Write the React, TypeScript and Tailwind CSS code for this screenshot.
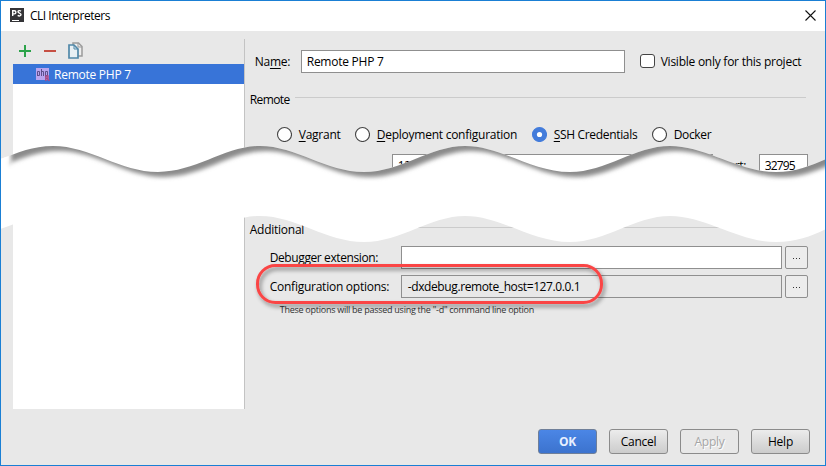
import type { ReactNode } from "react";

const WAVE_TOP =
  "M0 159 C18 153 32 146 53 146 C90 146 120 172 158 172 C196 172 225 146 260 146 C296 146 326 172 364 172 C401 172 430 146 465 146 C501 146 532 172 570 172 C606 172 635 146 670 146 C706 146 738 172 776 172 C796 172 812 165 826 159";

function Label({ children, className = "" }: { children: ReactNode; className?: string }) {
  return <span className={"block shrink-0 whitespace-nowrap leading-4 " + className}>{children}</span>;
}

function Mnemonic({ children }: { children: string }) {
  return <span className="underline decoration-1 underline-offset-2">{children}</span>;
}

function Radio({ checked = false }: { checked?: boolean }) {
  return (
    <svg className="block shrink-0" width="16" height="16" viewBox="0 0 16 16">
      <circle cx="8.5" cy="8.5" r="7" fill={checked ? "#437cdb" : "#fff"} stroke={checked ? "#437cdb" : "#444"} strokeWidth="1.1" />
      {checked && <circle cx="8.5" cy="8.5" r="2.6" fill="#fff" />}
    </svg>
  );
}

function Browse() {
  return (
    <button className="ml-[3px] flex h-[23px] w-[23px] shrink-0 items-center justify-center gap-[2px] rounded-[2px] border border-[#8f8f8f] bg-[#ececec] pt-[2px]">
      <i className="size-px bg-[#333]" />
      <i className="size-px bg-[#333]" />
      <i className="size-px bg-[#333]" />
    </button>
  );
}

function Section({ title, className = "" }: { title: string; className?: string }) {
  return (
    <div className="flex h-4 w-[556px]">
      <Label className={"pt-px " + className}>{title}</Label>
      <div className="mt-[6px] h-px grow bg-[#cbcbcb]" />
    </div>
  );
}

const BUTTON = "flex h-[25px] w-[59px] items-center justify-center rounded-[3px] border border-[#8b8b8b] ";

export default function App() {
  return (
    <div className="relative flex h-[466px] w-[826px] flex-col overflow-hidden border border-[#1a7fd4] bg-[#e8e8e8] font-['Open_Sans','Noto_Sans',sans-serif] text-[12px] tracking-[-0.25px] text-black">
      <header className="flex h-[30px] shrink-0 items-center bg-white pl-[9px] pr-[10px]">
        <svg className="-mt-[2px]" width="14" height="14" viewBox="0 0 14 14">
          <rect width="14" height="14" fill="#343437" />
          <path d="M2.7 8V2.7h1.6a1.5 1.5 0 0 1 0 3.2H2.7M11 3.1C9.8 2.3 8 2.5 8 3.8c0 1.5 3 1.1 3 2.8 0 1.5-2 1.7-3.3.8" fill="none" stroke="#fff" strokeWidth="1.4" />
          <path d="M2 12.5h7" stroke="#fff" />
        </svg>
        <Label className="ml-[6px] tracking-[-0.48px]">CLI Interpreters</Label>
        <svg className="-mt-px -mr-px ml-auto" width="11" height="11" viewBox="0 0 11 11">
          <path d="M.5.5l10 10M10.5.5l-10 10" stroke="#111" strokeWidth="1.1" />
        </svg>
      </header>

      <main className="flex h-[378px] shrink-0 pl-3">
        <aside className="flex w-[231px] flex-col">
          <div className="flex h-[33px] shrink-0 items-center pl-[6px] pt-[7px]">
            <svg width="12" height="12" viewBox="0 0 12 12">
              <path d="M6 0v12M0 6h12" stroke="#2ca34a" strokeWidth="2" />
            </svg>
            <svg className="ml-[13px]" width="12" height="12" viewBox="0 0 12 12">
              <path d="M0 6h12" stroke="#c64f43" strokeWidth="2" />
            </svg>
            <svg className="-mt-px ml-3" width="15" height="17" viewBox="0 0 15 17">
              <path d="M5 1h5.500l3.500 3.500V14H5z" fill="#eee" stroke="#9b9b9b" strokeWidth="1.5" />
              <path d="M10 1v4h4" fill="none" stroke="#9b9b9b" />
              <path d="M1 3h5l4 4v9H1z" fill="#e8f0f4" stroke="#5088a8" strokeWidth="1.7" />
              <path d="M6 3v4h4" fill="none" stroke="#5088a8" />
            </svg>
          </div>
          <div className="grow bg-white">
            <div className="flex h-5 items-center bg-[#3874d8] pl-[23px] text-white">
              <svg width="14" height="14" viewBox="0 0 14 14">
                <rect width="13" height="12" y="1" fill="#b9a4ef" />
                <path d="M1.500 9V4.500h2v4h-2M5.500 2v7M5.500 4.500h2v4.500M9.500 10V4.500h2v4h-2" fill="none" stroke="#5d4f8c" />
                <path d="M9.800 14V9h2.200v2.300H9.800M11 11.500l2.500 2.500" fill="none" stroke="#a94a86" strokeWidth="1.400" />
              </svg>
              <Label className="ml-[4px] mt-px">Remote PHP 7</Label>
            </div>
          </div>
        </aside>
        <div className="mt-2 w-px shrink-0 bg-[#c3c3c3]" />

        <section className="flex w-[581px] flex-col pl-[5px] pt-[19px]">
          <div className="flex h-[23px] items-center pl-[5px]">
            <Label className="w-[46px]">
              Na<Mnemonic>m</Mnemonic>e:
            </Label>
            <div className="flex h-[23px] w-[324px] items-center border border-[#8f8f8f] bg-white pl-[5px]">
              <Label>Remote PHP 7</Label>
            </div>
            <div className="-mt-[2px] ml-[15px] h-[14px] w-[15px] rounded-[3px] border border-[#444] bg-white" />
            <Label className="ml-[6px] pt-px">Visible only for this project</Label>
          </div>

          <div className="mt-[18px]">
            <Section title="Remote" className="w-[45px] tracking-[-0.6px]" />
          </div>

          <div className="mt-[19px] flex h-4 items-center pl-[26px]">
            <Radio />
            <Label className="ml-[7px] w-[55px] pt-[2px]">
              <Mnemonic>V</Mnemonic>agrant
            </Label>
            <Radio />
            <Label className="ml-[7px] w-[154px] pt-[2px]">
              <Mnemonic>D</Mnemonic>eployment configuration
            </Label>
            <Radio checked />
            <Label className="ml-[7px] w-[97px] pt-[2px] tracking-[-0.33px]">
              <Mnemonic>S</Mnemonic>SH Credentials
            </Label>
            <Radio />
            <Label className="ml-[7px] pt-[2px] tracking-[-0.35px]">Docker</Label>
          </div>

          <div className="mt-[12px] flex h-[23px] items-center pl-[142px]">
            <div className="flex h-[23px] w-[321px] shrink-0 items-center border border-[#8f8f8f] bg-white pl-[5px]">
              <Label>127.0.0.1</Label>
            </div>
            <Label className="ml-[8px] w-[38px]">Port:</Label>
            <div className="flex h-[23px] w-[49px] shrink-0 items-center border border-[#8f8f8f] bg-white pl-[5px]">
              <Label className="tracking-[-0.85px]">32795</Label>
            </div>
          </div>

          <div className="mt-11">
            <Section title="Additional" className="w-[60px]" />
          </div>

          <div className="mt-[9px] flex h-[23px] items-center pl-5">
            <Label className="w-[131px] pt-px tracking-[-0.4px]">Debugger extension:</Label>
            <div className="h-[23px] w-[381px] shrink-0 border border-[#8f8f8f] bg-white" />
            <Browse />
          </div>
          <div className="mt-[6px] flex h-[23px] items-center pl-5">
            <Label className="w-[131px] pt-px">Configuration options:</Label>
            <div className="flex h-[23px] w-[381px] shrink-0 items-center border border-[#8f8f8f] pl-[6px]">
              <Label className="pt-px tracking-[-0.39px]">-dxdebug.remote_host=127.0.0.1</Label>
            </div>
            <Browse />
          </div>
          <Label className="mt-[4px] pl-[30px] text-[9px] tracking-[-0.26px] text-[#333]">
            These options will be passed using the "-d" command line option
          </Label>
        </section>
      </main>

      <footer className="flex gap-3 pl-[537px] pt-5">
        <button className="flex h-[25px] w-[59px] items-center justify-center rounded-[3px] border border-[#6f7f99] bg-linear-to-b from-[#4b86e6] to-[#3c73ce] font-bold text-[#e8f0ff]">
          OK
        </button>
        <button className={BUTTON + "bg-linear-to-b from-[#ececec] to-[#cccccc]"}>Cancel</button>
        <button className={BUTTON + "text-[#a5a5a5] [text-shadow:1px_1px_0_#fff]"}>Apply</button>
        <button className={BUTTON + "bg-linear-to-b from-[#ececec] to-[#cccccc]"}>Help</button>
      </footer>

      <svg className="pointer-events-none absolute -left-px -top-px" width="826" height="466" viewBox="0 0 826 466">
        <defs>
          <clipPath id="band">
            <path d={WAVE_TOP + "V240H0Z"} />
          </clipPath>
          <clipPath id="gap">
            <path d="M0 130H826V229C812 236 796 242 776 242C738 242 706 216 670 216C635 216 606 242 570 242C532 242 501 216 465 216C430 216 401 242 364 242C326 242 296 216 260 216C225 216 196 242 158 242C120 242 90 216 53 216C32 216 18 223 0 229Z" />
          </clipPath>
          <filter id="soft" x="-5%" y="-20%" width="110%" height="150%">
            <feGaussianBlur stdDeviation="2" />
          </filter>
          <filter id="drop" x="-5%" y="-30%" width="112%" height="180%">
            <feDropShadow dx="2" dy="3" stdDeviation="2" floodColor="#000" floodOpacity="0.45" />
          </filter>
        </defs>
        <g clipPath="url(#gap)">
          <path d={WAVE_TOP + "V250H0Z"} fill="#fff" />
          <g clipPath="url(#band)">
            <path d={WAVE_TOP + "H850V100H5V159Z"} transform="translate(6 5)" fill="#8a8a8a" filter="url(#soft)" />
            <path d="M0 150H8V180H0Z" fill="#fff" filter="url(#soft)" />
          </g>
        </g>
        <rect x="257.500" y="265.500" width="344" height="37" rx="18" fill="none" stroke="#fa4545" strokeWidth="3" filter="url(#drop)" />
      </svg>
    </div>
  );
}
